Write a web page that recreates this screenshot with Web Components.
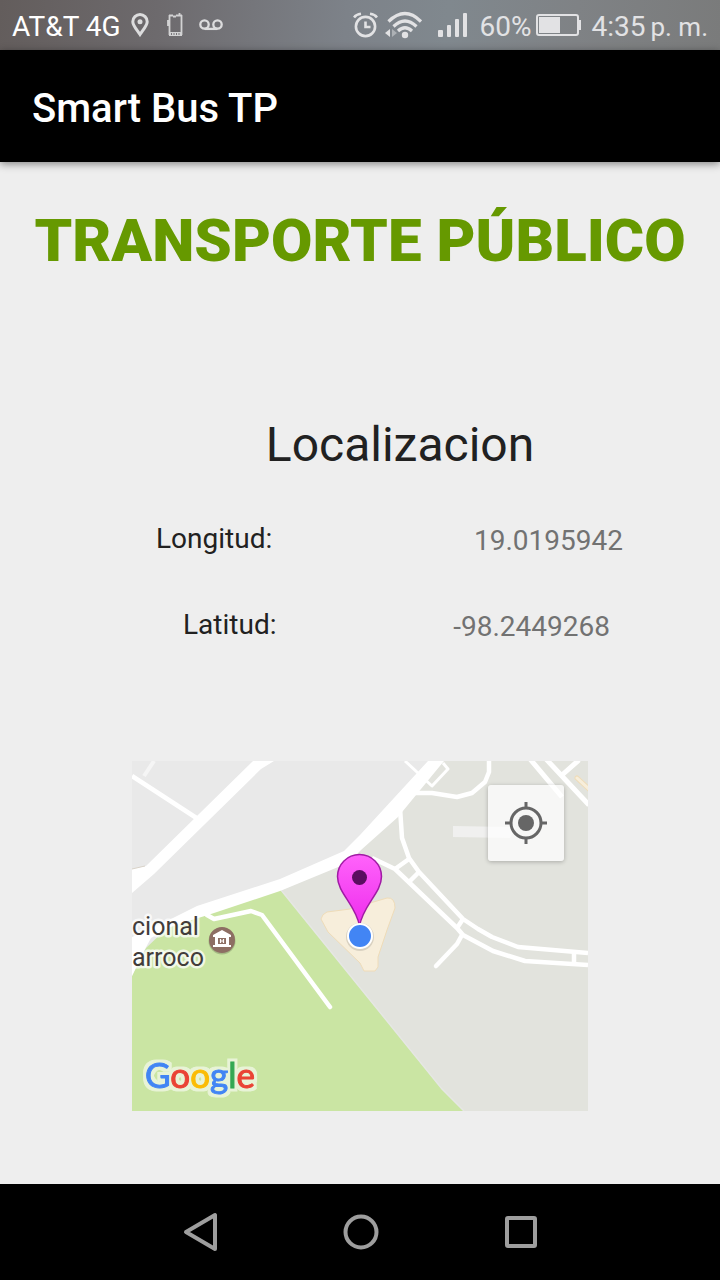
<!DOCTYPE html>
<html lang="es">
<head>
<meta charset="utf-8">
<meta name="viewport" content="width=device-width, initial-scale=1">
<title>Smart Bus TP</title>
<style>
  body { margin: 0; background: #eee; font-family: Roboto, "Liberation Sans", sans-serif; color: #212121; }
</style>
</head>
<body>
<smart-bus-app></smart-bus-app>
<script>
const define = (name, html) => {
  const template = document.createElement('template');
  template.innerHTML = html;
  customElements.define(name, class extends HTMLElement {
    constructor() {
      super();
      this.attachShadow({ mode: 'open' }).append(template.content.cloneNode(true));
    }
  });
};

define('status-bar', `
<style>
  :host { display: flex; align-items: center; justify-content: space-between; height: 50px; padding: 0 12px; box-sizing: border-box;
    background: linear-gradient(95deg, #635d5c, #6d6a6d 22%, #7d8289 48%, #80888e 62%, #7f8285 80%, #7a7b7b);
    font-size: 28px; line-height: 32px; color: #e2e2e4; white-space: nowrap; }
  div { display: flex; align-items: center; }
  span { padding-top: 4px; }
  .carrier { color: #fff; margin-right: 10px; }
  svg { display: block; flex: none; }
  .pin { margin-right: 18px; } .phone { margin-right: 16px; }
  .alarm { margin-right: 7px; } .wifi { margin-right: 16px; } .signal { margin-right: 11px; }
  .battery { margin: 0 9px 0 5px; }
  .time { display: flex; align-items: baseline; }
  small { font-size: 26px; margin-left: 5px; }
</style>
<div>
  <span class="carrier">AT&amp;T 4G</span>
  <svg class="pin" width="18" height="24" viewBox="0 0 18 24" fill="none" stroke="#dcdcdd" stroke-width="3"><path d="M9 21.500C6 17 1.800 12.500 1.800 8.700a7.200 7.200 0 0 1 14.400 0C16.200 12.500 12 17 9 21.500Z"/><circle cx="9" cy="8.700" r="2.500" fill="#dcdcdd" stroke="none"/></svg>
  <svg class="phone" width="16" height="24" viewBox="0 0 16 24"><path d="M2.500 2V22M14.500 2V22M2 2.500H6M6 3.500H9M9 2.500H15M1 7V13M12.500 0V3" fill="none" stroke="#d2d2d3" stroke-width="1.800"/><path d="M2 19H15V23H2Z" fill="#d2d2d3"/><path d="M4.500 20V22M7 20V22M9.500 20V22M12 20V22" stroke="#777579"/></svg>
  <svg width="24" height="14" viewBox="0 0 24 14" fill="none" stroke="#dcdcdd" stroke-width="2.300"><circle cx="5.500" cy="6.500" r="4.200"/><circle cx="18.500" cy="6.500" r="4.200"/><path d="M5.500 10.900H18.500"/></svg>
</div>
<div>
  <svg class="alarm" width="25" height="26" viewBox="0 0 25 26" fill="none" stroke="#e2e2e4" stroke-width="2.600"><circle cx="12.500" cy="14.500" r="9.600"/><path d="M12.500 9.500V15H17.500M1 5.500Q3 2.500 8 1.800M24 5.500Q22 2.500 17 1.800"/></svg>
  <svg class="wifi" width="37" height="28" viewBox="0 0 37 28" fill="none" stroke="#e2e2e4" stroke-width="3.200"><path d="M3.500 10.500Q20 -5.500 36 10.500M8.500 15.500Q20 4.500 31.500 15.500M13 20Q20 13.500 27 20"/><circle cx="20" cy="24" r="3.200" fill="#e2e2e4" stroke="none"/><path d="M5 18V26L0 22Z" fill="#e2e2e4" stroke="none"/><path d="M7 18V26L12 22Z" fill="#adb1b5" stroke="none"/></svg>
  <svg class="signal" width="30" height="26" viewBox="0 0 30 26" fill="#e2e2e4"><rect y="18" width="5" height="7" rx="1"/><rect x="9" y="13" width="4" height="12" rx="1"/><rect x="17" y="7" width="4" height="18" rx="1"/><rect x="25" y="1" width="4" height="24" rx="1"/></svg>
  <span>60%</span>
  <svg class="battery" width="46" height="22" viewBox="0 0 46 22"><rect x="1" y="1" width="41" height="20" rx="2" fill="none" stroke="#e2e2e4" stroke-width="2"/><path d="M3 3H24V19H3ZM42 6H45V16H42Z" fill="#e2e2e4"/></svg>
  <span class="time">4:35<small>p. m.</small></span>
</div>`);

define('app-bar', `
<style>
  :host { display: flex; align-items: center; position: relative; height: 112px; padding: 0 32px; background: #000; color: #fff; box-shadow: 0 2px 8px rgba(0,0,0,.45); }
  h1 { margin: 0; padding-top: 6px; font-size: 40px; line-height: 48px; font-weight: 500; }
</style>
<h1><slot></slot></h1>`);

define('coord-row', `
<style>
  :host { display: flex; justify-content: space-between; font-size: 28px; line-height: 32px; }
  .value { padding-top: 2px; color: #727272; }
</style>
<span><slot name="label"></slot></span><span class="value"><slot></slot></span>`);

define('map-view', `
<style>
  :host { display: block; position: relative; overflow: hidden; }
  .map { display: block; width: 100%; height: auto; }
  button { position: absolute; top: 24px; right: 24px; width: 76px; height: 76px; padding: 0; border: 0; border-radius: 3px;
    display: grid; place-items: center; background: rgba(255,255,255,.72); box-shadow: 0 1px 4px rgba(0,0,0,.25); }
  .poi { font-size: 25px; fill: #423c3a; stroke: rgba(255,255,255,.72); stroke-width: 5px; stroke-linejoin: round; paint-order: stroke; }
  .brand { font-family: Lato, sans-serif; font-size: 35px; stroke-width: 1px; filter: url(#halo); }
</style>
<svg class="map" viewBox="0 0 456 350" role="img" aria-label="Mapa">
  <defs>
    <linearGradient id="pin" x1="0" y1="0" x2="0" y2="1"><stop offset="0" stop-color="#ff63fb"/><stop offset="1" stop-color="#ee2cec"/></linearGradient>
    <filter id="halo" x="-10%" y="-20%" width="120%" height="140%" color-interpolation-filters="sRGB">
      <feMorphology in="SourceAlpha" operator="dilate" radius="3" result="grown"/>
      <feFlood flood-color="#e8f3d7"/><feComposite in2="grown" operator="in" result="edge"/>
      <feMerge><feMergeNode in="edge"/><feMergeNode in="SourceGraphic"/></feMerge>
    </filter>
  </defs>
  <rect width="456" height="350" fill="#e9e9e9"/>
  <path d="M148 130L215 100 235 80 310 0H456V350H332L310 328Z" fill="#e2e3dd"/>
  <path d="M0 215L14 187 34 168 75 153 149 129 310 328 332 350H0Z" fill="#cae5a3"/>
  <path d="M149 129L310 328 332 350" fill="none" stroke="#e6e7e4" stroke-width="1.500"/>
  <path d="M0 176L41 157 65 145 148 118 212 90 228 74 296 0H312L266 56 229 89 216 102 148 130 76 154 40 165 19 177 12 190 0 215Z" fill="#fff"/>
  <path d="M0 108L14 105 121 0H142L129 8 22 113 0 132Z" fill="#fff"/>
  <path d="M0 108L13 105" stroke="#d9d2c8"/>
  <path d="M22 0L12 15" stroke="#f5f5f5" stroke-width="4"/>
  <path d="M321 65V76L378 77 384 66Z" fill="#f0f0ef"/>
  <g fill="none" stroke="#fff" stroke-width="4.500" stroke-linejoin="round">
    <path d="M0 15L66 58"/>
    <path d="M75 154L82 158 119 150 130 154 198 246" stroke-linecap="round"/>
    <path d="M273 0L300 25 316 8 311 2" stroke-width="3"/>
    <path d="M281 32H300L325 36 340 32 353 21 357 11V0"/>
    <path d="M268 47L270 77 277 97 287 111 331 158 346 168 360 176 386 186 456 192"/>
    <path d="M240 97L263 108 325 167 331 174 361 190 393 200 456 204"/>
    <path d="M263 108L277 98M277 121L287 111M325 167L331 158M442 191V203"/>
    <path d="M330 174L325 183 304 205" stroke-linecap="round"/>
    <path d="M398 -2L430 36M414 -2L457 44M447 -1L430 14" stroke-width="5"/>
  </g>
  <path d="M445 17L458 29" stroke="#efdcb8" stroke-width="5" stroke-linecap="round"/><path d="M445 17L458 29" stroke="#f7eedb" stroke-width="3" stroke-linecap="round"/>
  <path d="M189 158Q190 153 195 151L218 148 238 142 255 137Q263 136 263 147L255 169 246 196V206L243 210H232L228 202 196 171Z" fill="#f7eedb" stroke="#efdcb8"/>
  <text class="poi" x="0" y="174">cional</text>
  <text class="poi" x="0" y="205">arroco</text>
  <circle cx="90" cy="180" r="13.500" fill="#000" opacity=".18"/>
  <circle cx="90" cy="179" r="13" fill="#8d6e63"/>
  <path d="M81 176V174L90 169 99 174V176H97V184H99V186H81V184H83V176Z" fill="#fff"/><path d="M86 177H94V183H86Z" fill="#8d6e63"/><path d="M88.500 178V182M91.500 178V182M88 180H92" stroke="#fff" stroke-width="1.200"/>
  <path d="M227.500 165C224 144 205.500 132 205.500 115.500a22 22 0 0 1 44 0C249.500 132 231 144 227.500 165Z" fill="url(#pin)" stroke="#a01ba4" stroke-width="1.500"/>
  <circle cx="227.500" cy="116.500" r="7.500" fill="#5a0e60"/>
  <circle cx="228" cy="176" r="14" fill="#000" opacity=".12"/>
  <circle cx="228" cy="175" r="12" fill="#4285f4" stroke="#fff" stroke-width="2"/>
  <text class="brand" x="13" y="327"><tspan fill="#4285f4" stroke="#4285f4">G</tspan><tspan fill="#ea4335" stroke="#ea4335">o</tspan><tspan fill="#fbbc05" stroke="#fbbc05">o</tspan><tspan fill="#4285f4" stroke="#4285f4">g</tspan><tspan fill="#34a853" stroke="#34a853">l</tspan><tspan fill="#ea4335" stroke="#ea4335">e</tspan></text>
</svg>
<button type="button" aria-label="Mi ubicación">
  <svg width="42" height="42" viewBox="0 0 42 42" fill="none" stroke="#666" stroke-width="3"><circle cx="21" cy="21" r="15"/><circle cx="21" cy="21" r="8" fill="#666" stroke="none"/><path d="M21 0V6M21 36V42M0 21H6M36 21H42"/></svg>
</button>`);

define('nav-bar', `
<style>
  :host { display: flex; justify-content: center; height: 96px; padding-left: 2px; background: #000; }
  button { width: 160px; padding: 0; border: 0; background: none; display: grid; place-items: center; }
  svg { fill: none; stroke: #9e9e9e; stroke-width: 4px; stroke-linejoin: round; }
</style>
<button type="button" aria-label="Atrás"><svg width="36" height="40" viewBox="0 0 36 40"><path d="M32 3V37L3 20Z"/></svg></button>
<button type="button" aria-label="Inicio"><svg width="36" height="36" viewBox="0 0 36 36"><circle cx="18" cy="18" r="15.500"/></svg></button>
<button type="button" aria-label="Recientes"><svg width="32" height="32" viewBox="0 0 32 32"><rect x="2" y="2" width="28" height="28" rx="1"/></svg></button>`);

define('smart-bus-app', `
<style>
  :host { display: flex; flex-direction: column; min-height: 100vh; }
  main { flex: 1; padding-top: 43px; }
  h2 { margin: 0; font-size: 60px; line-height: 72px; font-weight: 900; color: #690; text-align: center; }
  h3 { margin: 140px 0 50px; padding-left: 80px; font-size: 48px; line-height: 56px; font-weight: 400; text-align: center; }
  .lon { padding: 0 97px 0 156px; margin-bottom: 52px; }
  .lat { padding: 0 110px 0 183px; }
  map-view { margin: 118px 132px 73px; }
</style>
<status-bar></status-bar>
<app-bar>Smart Bus TP</app-bar>
<main>
  <h2>TRANSPORTE PÚBLICO</h2>
  <h3>Localizacion</h3>
  <coord-row class="lon"><span slot="label">Longitud:</span>19.0195942</coord-row>
  <coord-row class="lat"><span slot="label">Latitud:</span>-98.2449268</coord-row>
  <map-view></map-view>
</main>
<nav-bar></nav-bar>`);
</script>
</body>
</html>
